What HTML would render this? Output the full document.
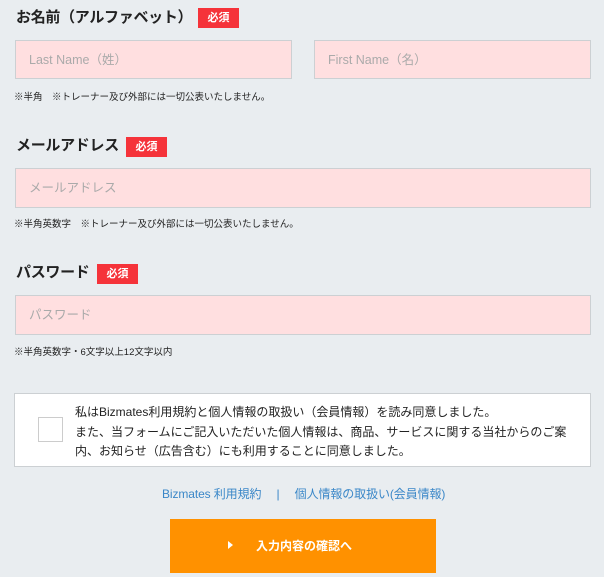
<!DOCTYPE html>
<html><head><meta charset="utf-8"><style>
*{margin:0;padding:0;box-sizing:border-box}
body{width:604px;height:577px;background:#e9edf0;position:relative;overflow:hidden;font-family:"Liberation Sans","Noto Sans CJK JP",sans-serif;color:#222}
.a{position:absolute;white-space:nowrap}
.t{font-size:15px;font-weight:bold;line-height:20px;letter-spacing:-0.3px}
.b{background:#f5333a;color:#fff;font-size:11px;font-weight:bold;width:41px;height:20px;line-height:20px;text-align:center}
.in{background:#ffdfe0;border:1px solid #ccd0d3;font-size:12.5px;color:#aaa;padding-left:13px;line-height:39px}
.n{font-size:9.5px;line-height:12px;color:#222}
</style></head><body>
<div class="a t" style="left:16px;top:8px">お名前（アルファベット）</div>
<div class="a b" style="left:198px;top:8px">必須</div>
<div class="a in" style="left:15px;top:40px;width:277px;height:39px">Last Name（姓）</div>
<div class="a in" style="left:314px;top:40px;width:277px;height:39px">First Name（名）</div>
<div class="a n" style="left:14px;top:92px">※半角　※トレーナー及び外部には一切公表いたしません。</div>

<div class="a t" style="left:16px;top:136px">メールアドレス</div>
<div class="a b" style="left:126px;top:137px">必須</div>
<div class="a in" style="left:15px;top:168px;width:576px;height:40px">メールアドレス</div>
<div class="a n" style="left:14px;top:219px">※半角英数字　※トレーナー及び外部には一切公表いたしません。</div>

<div class="a t" style="left:16px;top:263px">パスワード</div>
<div class="a b" style="left:97px;top:264px">必須</div>
<div class="a in" style="left:15px;top:295px;width:576px;height:40px">パスワード</div>
<div class="a n" style="left:14px;top:347px">※半角英数字・6文字以上12文字以内</div>

<div class="a" style="left:14px;top:393px;width:577px;height:74px;background:#fff;border:1px solid #ccd0d3"></div>
<div class="a" style="left:38px;top:417px;width:25px;height:25px;border:1px solid #ccc;background:#fff"></div>
<div class="a" style="left:75px;top:403px;font-size:12px;line-height:19.5px;color:#222">私はBizmates利用規約と個人情報の取扱い（会員情報）を読み同意しました。<br>また、当フォームにご記入いただいた個人情報は、商品、サービスに関する当社からのご案<br>内、お知らせ（広告含む）にも利用することに同意しました。</div>

<div class="a" style="left:162px;top:486px;font-size:12px;line-height:16px;color:#3a87c8;letter-spacing:-0.1px">Bizmates 利用規約　 |　 個人情報の取扱い(会員情報)</div>

<div class="a" style="left:170px;top:519px;width:266px;height:54px;background:#ff9100"></div>
<div class="a" style="left:228px;top:541px;width:0;height:0;border-left:5px solid #fff;border-top:4px solid transparent;border-bottom:4px solid transparent"></div>
<div class="a" style="left:256px;top:537px;font-size:12px;font-weight:bold;color:#fff;line-height:18px">入力内容の確認へ</div>
</body></html>
